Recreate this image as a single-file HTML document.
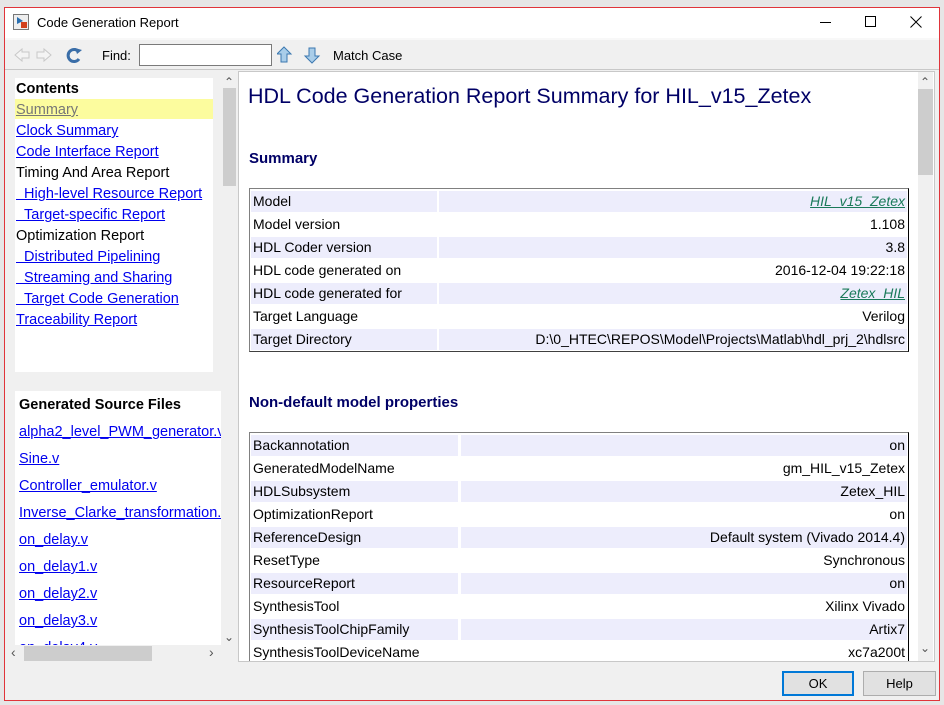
<!DOCTYPE html>
<html><head><meta charset="utf-8"><style>
*{margin:0;padding:0;box-sizing:border-box}
body{width:944px;height:705px;background:#e6e6e6;position:relative;overflow:hidden;font-family:"Liberation Sans",sans-serif;font-size:13px;color:#000}
.a{position:absolute}
#win{left:4px;top:7px;width:936px;height:694px;border:1px solid #e0343a;background:#f0f0f0}
a{color:#0000ee;text-decoration:underline}
.nav{position:absolute;left:16px;white-space:nowrap;font-size:14.5px}
.row{position:absolute;height:21px;line-height:21px;white-space:nowrap;font-size:14px}
.l{padding-left:2px}
.v{text-align:right;padding-right:2px}
.sh{background:#ededfc}
.sf{position:absolute;left:19px;font-size:14.5px;white-space:nowrap}
</style></head><body>
<div id="win" class="a"></div>
<div class="a" style="left:5px;top:8px;width:934px;height:30px;background:#fff"></div>
<svg class="a" style="left:13px;top:14px" width="16" height="16"><rect x="0.5" y="0.5" width="15" height="15" fill="#eee" stroke="#777"/><path d="M4 3 L10 7 L4 10Z" fill="#2a6fb0"/><rect x="8" y="8" width="6" height="6" fill="#d2401d"/></svg>
<div class="a" style="left:37px;top:15px;font-size:13px">Code Generation Report</div>
<div class="a" style="left:820px;top:22px;width:11px;height:1px;background:#000"></div>
<div class="a" style="left:865px;top:16px;width:11px;height:11px;border:1px solid #000"></div>
<svg class="a" style="left:910px;top:16px" width="12" height="12"><path d="M0.5 0.5L11.5 11.5M11.5 0.5L0.5 11.5" stroke="#000" stroke-width="1"/></svg>
<div class="a" style="left:5px;top:38px;width:934px;height:2px;background:#f8f8f8"></div>
<svg class="a" style="left:13px;top:46px" width="70" height="18">
<path d="M2 9 L9 3 L9 6 L16 6 L16 12 L9 12 L9 15Z" fill="#f4f4f4" stroke="#c8c8c8"/>
<path d="M38 9 L31 3 L31 6 L24 6 L24 12 L31 12 L31 15Z" fill="#f4f4f4" stroke="#c8c8c8"/>
<path d="M66 6 A6 6 0 1 0 66 13" fill="none" stroke="#3a6ea8" stroke-width="3"/><path d="M62 2 L69 4 L64 8Z" fill="#3a6ea8"/>
</svg>
<div class="a" style="left:102px;top:48px">Find:</div>
<div class="a" style="left:139px;top:44px;width:133px;height:22px;background:#fff;border:1px solid #7a7a7a"></div>
<svg class="a" style="left:277px;top:46px" width="44" height="18">
<path d="M7 1 L14 8 L10 8 L10 16 L4 16 L4 8 L0 8Z" fill="#a9cde9" stroke="#3b78b0"/>
<path d="M35 17 L42 10 L38 10 L38 2 L32 2 L32 10 L28 10Z" fill="#a9cde9" stroke="#3b78b0"/>
</svg>
<div class="a" style="left:333px;top:48px">Match Case</div>
<div class="a" style="left:5px;top:69px;width:934px;height:1px;background:#c8c8c8"></div>
<div class="a" style="left:15px;top:78px;width:198px;height:294px;background:#fff"></div>
<div class="a" style="left:15px;top:99px;width:198px;height:20px;background:#fcfc9e"></div>
<div class="nav" style="top:81px;font-weight:bold">Contents</div>
<div class="nav" style="top:102px"><a style="color:#777">Summary</a></div>
<div class="nav" style="top:123px"><a>Clock Summary</a></div>
<div class="nav" style="top:144px"><a>Code Interface Report</a></div>
<div class="nav" style="top:165px">Timing And Area Report</div>
<div class="nav" style="top:186px"><a>&nbsp;&nbsp;High-level Resource Report</a></div>
<div class="nav" style="top:207px"><a>&nbsp;&nbsp;Target-specific Report</a></div>
<div class="nav" style="top:228px">Optimization Report</div>
<div class="nav" style="top:249px"><a>&nbsp;&nbsp;Distributed Pipelining</a></div>
<div class="nav" style="top:270px"><a>&nbsp;&nbsp;Streaming and Sharing</a></div>
<div class="nav" style="top:291px"><a>&nbsp;&nbsp;Target Code Generation</a></div>
<div class="nav" style="top:312px"><a>Traceability Report</a></div>
<div class="a" style="left:221px;top:72px;width:16px;height:588px;background:#f0f0f0"></div>
<div class="a" style="left:223px;top:88px;width:13px;height:98px;background:#cdcdcd"></div>
<div class="a" style="left:224px;top:75px;font-size:12px;color:#555">&#8963;</div>
<div class="a" style="left:224px;top:630px;font-size:12px;color:#555">&#8964;</div>
<div class="a" style="left:15px;top:391px;width:206px;height:254px;background:#fff;overflow:hidden">
<div class="sf" style="left:4px;top:6px;font-weight:bold">Generated Source Files</div>
<div class="sf" style="left:4px;top:33px"><a>alpha2_level_PWM_generator.v</a></div>
<div class="sf" style="left:4px;top:60px"><a>Sine.v</a></div>
<div class="sf" style="left:4px;top:87px"><a>Controller_emulator.v</a></div>
<div class="sf" style="left:4px;top:114px"><a>Inverse_Clarke_transformation.v</a></div>
<div class="sf" style="left:4px;top:141px"><a>on_delay.v</a></div>
<div class="sf" style="left:4px;top:168px"><a>on_delay1.v</a></div>
<div class="sf" style="left:4px;top:195px"><a>on_delay2.v</a></div>
<div class="sf" style="left:4px;top:222px"><a>on_delay3.v</a></div>
<div class="sf" style="left:4px;top:249px"><a>on_delay4.v</a></div>
</div>
<div class="a" style="left:7px;top:645px;width:214px;height:16px;background:#f0f0f0"></div>
<div class="a" style="left:24px;top:646px;width:128px;height:15px;background:#cdcdcd"></div>
<div class="a" style="left:11px;top:644px;font-size:14px;color:#555">&#8249;</div>
<div class="a" style="left:209px;top:644px;font-size:14px;color:#555">&#8250;</div>
<div class="a" style="left:238px;top:71px;width:697px;height:591px;border:1px solid #c8c8c8;background:#fff"></div>
<div class="a" style="left:918px;top:72px;width:15px;height:589px;background:#f0f0f0"></div>
<div class="a" style="left:918px;top:89px;width:15px;height:86px;background:#cdcdcd"></div>
<div class="a" style="left:920px;top:75px;font-size:12px;color:#555">&#8963;</div>
<div class="a" style="left:920px;top:641px;font-size:12px;color:#555">&#8964;</div>
<div class="a" style="left:239px;top:72px;width:678px;height:589px;overflow:hidden">
 <div class="a" style="left:9px;top:12px;font-size:21.5px;color:#000066;white-space:nowrap">HDL Code Generation Report Summary for HIL_v15_Zetex</div>
 <div class="a" style="left:10px;top:78px;font-size:15px;font-weight:bold;color:#000066">Summary</div>
 <div class="a" style="left:10px;top:116px;width:660px;height:164px;border:1px solid #808080;border-right-color:#000;border-bottom-color:#404040"></div>
 <div class="a" style="left:10px;top:322px;font-size:15px;font-weight:bold;color:#000066">Non-default model properties</div>
 <div class="a" style="left:10px;top:360px;width:660px;height:240px;border:1px solid #808080;border-right-color:#000"></div>
</div>
<script>
function rows(data,top,lw,vx){var h='';data.forEach(function(d,i){var y=top+i*23,c=i%2==0?' sh':'';
h+='<div class="row l'+c+'" style="left:251px;top:'+y+'px;width:'+lw+'px">'+d[0]+'</div>';
h+='<div class="row v'+c+'" style="left:'+vx+'px;top:'+y+'px;width:'+(907-vx)+'px">'+d[1]+'</div>';});return h;}
var s1=[["Model",'<a style="color:#1a7a5a;font-style:italic">HIL_v15_Zetex</a>'],["Model version","1.108"],["HDL Coder version","3.8"],["HDL code generated on","2016-12-04 19:22:18"],["HDL code generated for",'<a style="color:#1a7a5a;font-style:italic">Zetex_HIL</a>'],["Target Language","Verilog"],["Target Directory","D:\\0_HTEC\\REPOS\\Model\\Projects\\Matlab\\hdl_prj_2\\hdlsrc"]];
var s2=[["Backannotation","on"],["GeneratedModelName","gm_HIL_v15_Zetex"],["HDLSubsystem","Zetex_HIL"],["OptimizationReport","on"],["ReferenceDesign","Default system (Vivado 2014.4)"],["ResetType","Synchronous"],["ResourceReport","on"],["SynthesisTool","Xilinx Vivado"],["SynthesisToolChipFamily","Artix7"],["SynthesisToolDeviceName","xc7a200t"]];
var w=document.createElement('div');w.className='a';w.style.cssText='left:0;top:0;width:944px;height:661px;overflow:hidden';
w.innerHTML=rows(s1,191,186,439)+rows(s2,435,207,461);document.body.appendChild(w);
</script>
<div class="a" style="left:782px;top:671px;width:72px;height:25px;border:2px solid #0078d7;background:#e1e1e1;text-align:center;line-height:21px;font-size:13px">OK</div>
<div class="a" style="left:863px;top:671px;width:73px;height:25px;border:1px solid #adadad;background:#e1e1e1;text-align:center;line-height:23px;font-size:13px">Help</div>
</body></html>
